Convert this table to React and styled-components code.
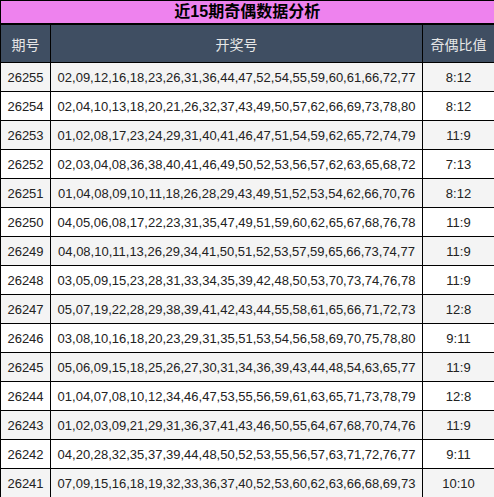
import React from "react";
import styled, { createGlobalStyle } from "styled-components";

const Global = createGlobalStyle`
  html, body { margin: 0; padding: 0; background: #fff; }
  body { font-family: "Liberation Sans", Arial, "Noto Sans CJK SC", sans-serif; }
`;

const rows = [
  ["26255", "02,09,12,16,18,23,26,31,36,44,47,52,54,55,59,60,61,66,72,77", "8:12"],
  ["26254", "02,04,10,13,18,20,21,26,32,37,43,49,50,57,62,66,69,73,78,80", "8:12"],
  ["26253", "01,02,08,17,23,24,29,31,40,41,46,47,51,54,59,62,65,72,74,79", "11:9"],
  ["26252", "02,03,04,08,36,38,40,41,46,49,50,52,53,56,57,62,63,65,68,72", "7:13"],
  ["26251", "01,04,08,09,10,11,18,26,28,29,43,49,51,52,53,54,62,66,70,76", "8:12"],
  ["26250", "04,05,06,08,17,22,23,31,35,47,49,51,59,60,62,65,67,68,76,78", "11:9"],
  ["26249", "04,08,10,11,13,26,29,34,41,50,51,52,53,57,59,65,66,73,74,77", "11:9"],
  ["26248", "03,05,09,15,23,28,31,33,34,35,39,42,48,50,53,70,73,74,76,78", "11:9"],
  ["26247", "05,07,19,22,28,29,38,39,41,42,43,44,55,58,61,65,66,71,72,73", "12:8"],
  ["26246", "03,08,10,16,18,20,23,29,31,35,51,53,54,56,58,69,70,75,78,80", "9:11"],
  ["26245", "05,06,09,15,18,25,26,27,30,31,34,36,39,43,44,48,54,63,65,77", "11:9"],
  ["26244", "01,04,07,08,10,12,34,46,47,53,55,56,59,61,63,65,71,73,78,79", "12:8"],
  ["26243", "01,02,03,09,21,29,31,36,37,41,43,46,50,55,64,67,68,70,74,76", "11:9"],
  ["26242", "04,20,28,32,35,37,39,44,48,50,52,53,55,56,57,63,71,72,76,77", "9:11"],
  ["26241", "07,09,15,16,18,19,32,33,36,37,40,52,53,60,62,63,66,68,69,73", "10:10"],
];

const Table = styled.table`
  width: 494px;
  border-collapse: collapse;
  table-layout: fixed;
  font-family: "Liberation Sans", Arial, "Noto Sans CJK SC", sans-serif;
  border: 1px solid #000;
`;

const TitleCell = styled.th`
  height: 22px;
  padding: 0;
  background: #ee82ee;
  color: #000;
  font-size: 16px;
  font-weight: bold;
  text-align: center;
  border: 1px solid #000;
  border-bottom: 2px solid #000;
  border-right: 2px solid #000;
  line-height: 22px;
`;

const HeadCell = styled.th`
  height: 37px;
  padding: 0;
  background: #3f4e62;
  color: #e6e6e6;
  font-size: 14px;
  font-weight: normal;
  text-align: center;
  border: 1px solid #000;
`;

const Row = styled.tr`
  background: ${(p) => (p.$odd ? "#f4f4f4" : "#ffffff")};
`;

const Cell = styled.td`
  height: 28px;
  padding: 0;
  font-size: 13px;
  color: #222;
  text-align: center;
  border: 1px solid #000;
  white-space: nowrap;
  overflow: hidden;
`;

export default function App() {
  return (
    <>
      <Global />
      <Table>
        <colgroup>
          <col style={{ width: 50 }} />
          <col style={{ width: 372 }} />
          <col style={{ width: 72 }} />
        </colgroup>
        <thead>
          <tr>
            <TitleCell colSpan={3}>近15期奇偶数据分析</TitleCell>
          </tr>
          <tr>
            <HeadCell>期号</HeadCell>
            <HeadCell>开奖号</HeadCell>
            <HeadCell>奇偶比值</HeadCell>
          </tr>
        </thead>
        <tbody>
          {rows.map((r, i) => (
            <Row key={r[0]} $odd={i % 2 === 0}>
              <Cell>{r[0]}</Cell>
              <Cell>{r[1]}</Cell>
              <Cell>{r[2]}</Cell>
            </Row>
          ))}
        </tbody>
      </Table>
    </>
  );
}
